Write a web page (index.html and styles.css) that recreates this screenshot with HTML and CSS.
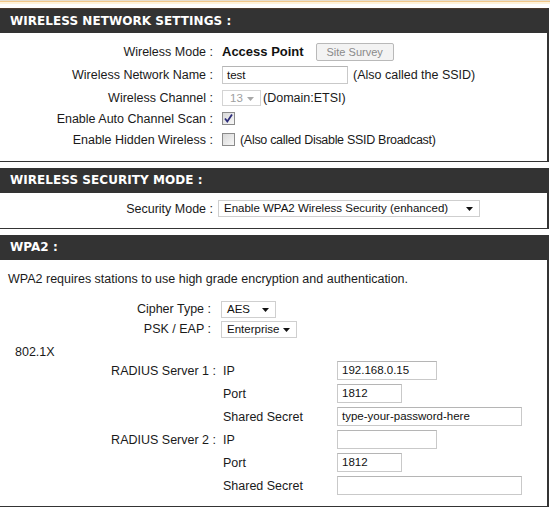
FILE: index.html
```html
<!DOCTYPE html>
<html>
<head>
<meta charset="utf-8">
<link rel="stylesheet" href="styles.css">
</head>
<body>
<div class="topbar"><div class="tb1"></div><div class="tb2"></div><div class="tb3"></div></div>

<section class="box box1">
  <h2 class="hdr">WIRELESS NETWORK SETTINGS :</h2>
  <div class="body b1">
    <div class="row">
      <div class="lbl">Wireless Mode :</div>
      <div class="val"><span class="mode">Access Point</span><span class="btn">Site Survey</span></div>
    </div>
    <div class="row">
      <div class="lbl">Wireless Network Name :</div>
      <div class="val"><span class="inp w-ssid">test</span><span class="note">(Also called the SSID)</span></div>
    </div>
    <div class="row">
      <div class="lbl">Wireless Channel :</div>
      <div class="val"><span class="sel dis w-ch">13<svg class="arr" width="7" height="4" viewBox="0 0 7 4"><path d="M0 0H7L3.5 4Z" fill="#a8a8a8"/></svg></span><span class="note tight">(Domain:ETSI)</span></div>
    </div>
    <div class="row short">
      <div class="lbl">Enable Auto Channel Scan :</div>
      <div class="val"><span class="cb"><svg width="11" height="11" viewBox="0 0 11 11"><path d="M2 5.5L4.3 8.5L9 1.5" fill="none" stroke="#2d2d7a" stroke-width="1.8"/></svg></span></div>
    </div>
    <div class="row">
      <div class="lbl">Enable Hidden Wireless :</div>
      <div class="val"><span class="cb"></span><span class="note narrow">(Also called Disable SSID Broadcast)</span></div>
    </div>
  </div>
</section>

<section class="box box2">
  <h2 class="hdr">WIRELESS SECURITY MODE :</h2>
  <div class="body b2">
    <div class="row">
      <div class="lbl">Security Mode :</div>
      <div class="val v2"><span class="sel w-sec">Enable WPA2 Wireless Security (enhanced)<svg class="arr" width="7" height="4" viewBox="0 0 7 4"><path d="M0 0H7L3.5 4Z" fill="#111"/></svg></span></div>
    </div>
  </div>
</section>

<section class="box box3">
  <h2 class="hdr">WPA2 :</h2>
  <div class="body b3">
    <p class="desc">WPA2 requires stations to use high grade encryption and authentication.</p>
    <div class="row mid">
      <div class="lbl l3">Cipher Type :</div>
      <div class="val v3"><span class="sel w-aes">AES<svg class="arr" width="7" height="4" viewBox="0 0 7 4"><path d="M0 0H7L3.5 4Z" fill="#111"/></svg></span></div>
    </div>
    <div class="row mid">
      <div class="lbl l3">PSK / EAP :</div>
      <div class="val v3"><span class="sel w-ent">Enterprise<svg class="arr" width="7" height="4" viewBox="0 0 7 4"><path d="M0 0H7L3.5 4Z" fill="#111"/></svg></span></div>
    </div>
    <div class="dot1x">802.1X</div>
    <div class="radius">
      <div class="rl">RADIUS Server 1 :</div><div class="rs">IP</div><div class="rv"><span class="inp w-ip">192.168.0.15</span></div>
      <div class="rl"></div><div class="rs">Port</div><div class="rv"><span class="inp w-port">1812</span></div>
      <div class="rl"></div><div class="rs">Shared Secret</div><div class="rv"><span class="inp w-sec2">type-your-password-here</span></div>
      <div class="rl">RADIUS Server 2 :</div><div class="rs">IP</div><div class="rv"><span class="inp w-ip"></span></div>
      <div class="rl"></div><div class="rs">Port</div><div class="rv"><span class="inp w-port">1812</span></div>
      <div class="rl"></div><div class="rs">Shared Secret</div><div class="rv"><span class="inp w-sec2"></span></div>
    </div>
  </div>
</section>
</body>
</html>
```

FILE: styles.css
```css
html, body {
  margin: 0;
  padding: 0;
  background: #fff;
}
body {
  width: 550px;
  font-family: "Liberation Sans", Arial, sans-serif;
  font-size: 12.5px;
  color: #1a1a1a;
}
.topbar { height: 8px; }
.tb1 { height: 1px; background: #e6ded2; }
.tb2 { height: 1px; background: #f2c889; }
.tb3 { height: 2px; background: #fff3dc; }

.box {
  width: 547px;
  border-right: 2px solid #343434;
  border-bottom: 1px solid #343434;
}
.box2, .box3 { margin-top: 6px; }
.hdr {
  margin: 0;
  height: 25px;
  line-height: 25px;
  background: #333;
  color: #fff;
  font-family: "DejaVu Sans", Verdana, sans-serif;
  font-weight: bold;
  font-size: 12px;
  letter-spacing: 0.05px;
  padding-left: 10px;
}
.box1 .hdr { border-top: 1px solid #4b3b30; height: 24px; line-height: 25px; }

.body { display: flex; flex-direction: column; }
.b1 { padding: 7px 0 10px; }
.b2 { padding: 4px 0 8px; }
.b3 { padding: 0 0 9px; }

.row { display: flex; align-items: center; height: 23px; }
.row.short { height: 19px; }
.row.mid { height: 20px; }
.lbl { width: 213px; text-align: right; white-space: nowrap; }
.val { margin-left: 9px; display: flex; align-items: center; white-space: nowrap; }
.v2 { margin-left: 5px; }
.l3 { width: 211px; }
.v3 { margin-left: 10px; }

.mode {
  font-weight: bold;
  font-size: 13px;
  color: #111;
}
.btn {
  margin-left: 12px;
  box-sizing: border-box;
  width: 78px;
  height: 18px;
  line-height: 16px;
  border: 1px solid #b9b9b9;
  border-radius: 2px;
  background: #f3f3f3;
  color: #8a8a8a;
  font-size: 11px;
  text-align: center;
}
.inp {
  box-sizing: border-box;
  display: inline-block;
  height: 19px;
  line-height: 17px;
  border: 1px solid #c9c9c9;
  border-top-color: #b5b5b5;
  background: #fff;
  padding-left: 4px;
  font-size: 11.5px;
  color: #111;
}
.w-ssid { width: 126px; height: 18px; line-height: 16px; }
.w-ip { width: 100px; }
.w-port { width: 65px; }
.w-sec2 { width: 185px; }
.note { margin-left: 5px; }
.note.narrow { letter-spacing: -0.3px; }
.note.tight { margin-left: 2px; }

.sel {
  position: relative;
  box-sizing: border-box;
  display: inline-block;
  height: 17px;
  line-height: 15px;
  border: 1px solid #cfcfcf;
  background: #fff;
  padding-left: 5px;
  font-size: 11.5px;
  color: #111;
}
.sel .arr { position: absolute; right: 6px; top: 6px; }
.sel.dis { color: #a0a0a0; border-color: #d4d4d4; }
.w-ch { width: 39px; height: 16px; padding-left: 7px; }
.w-sec { width: 262px; }
.w-aes { width: 55px; }
.w-ent { width: 76px; }

.cb {
  box-sizing: border-box;
  display: inline-flex;
  align-items: center;
  justify-content: center;
  width: 13px;
  height: 13px;
  border: 1px solid #8b8b8b;
  background: linear-gradient(135deg, #d9d9d9, #f7f7f7);
}

.desc {
  margin: 12px 0 0 8px;
  line-height: 14px;
}
.desc + .row { margin-top: 13px; }
.dot1x {
  margin: 5px 0 0 15px;
  height: 16px;
  line-height: 16px;
}
.radius {
  margin-top: -1px;
  display: grid;
  grid-template-columns: 216px 121px auto;
  grid-auto-rows: 23px;
  align-items: center;
}
.rl { text-align: right; white-space: nowrap; }
.rs { padding-left: 7px; white-space: nowrap; }
.rv { display: flex; align-items: center; }
```
